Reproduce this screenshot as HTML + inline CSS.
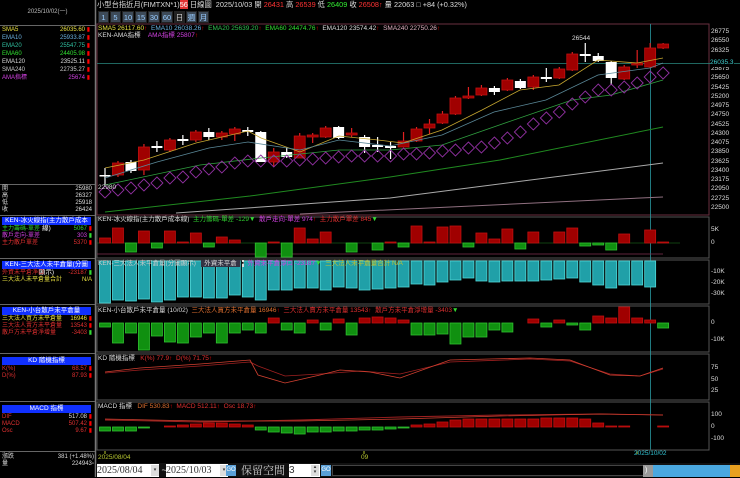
<!DOCTYPE html>
<html><head><meta charset="utf-8">
<style>
*{margin:0;padding:0;box-sizing:border-box}
body{width:740px;height:477px;background:#000;overflow:hidden;position:relative;font-family:"Liberation Sans","Noto Sans CJK TC",sans-serif;font-size:7px;color:#ddd}
.a{position:absolute;white-space:nowrap;line-height:8px}
.r{text-align:right}
.hd{position:absolute;left:2px;width:89px;height:8px;background:#1030ff;color:#fff;text-align:center;font-size:6.5px;line-height:8px}
.btn{position:absolute;top:11px;height:12px;width:11px;background:#3d4a58;color:#9cf;font-size:7.5px;text-align:center;line-height:12px;border:1px solid #222}
svg{position:absolute;left:0;top:0}
</style></head><body>
<svg id="s" width="740" height="477"></svg>

<div class="a" style="left:0;top:8px;width:95px;text-align:center;color:#bbb;font-size:6px">2025/10/02(一)</div>
<div style="position:absolute;left:0;top:25px;width:95px;height:1px;background:#666"></div>
<div class="a" style="left:2px;top:26px;color:#e8e040;font-size:6px">SMA5</div><div class="a r" style="left:40px;width:50px;top:26px;color:#e8e040;font-size:6px">26035.60 <span style="color:red">▮</span></div>
<div class="a" style="left:2px;top:34px;color:#6ab0e0;font-size:6px">EMA10</div><div class="a r" style="left:40px;width:50px;top:34px;color:#6ab0e0;font-size:6px">25933.87 <span style="color:red">▮</span></div>
<div class="a" style="left:2px;top:42px;color:#30c0a0;font-size:6px">EMA20</div><div class="a r" style="left:40px;width:50px;top:42px;color:#30c0a0;font-size:6px">25547.75 <span style="color:red">▮</span></div>
<div class="a" style="left:2px;top:50px;color:#30e030;font-size:6px">EMA60</div><div class="a r" style="left:40px;width:50px;top:50px;color:#30e030;font-size:6px">24405.98 <span style="color:red">▮</span></div>
<div class="a" style="left:2px;top:58px;color:#ddd;font-size:6px">EMA120</div><div class="a r" style="left:40px;width:50px;top:58px;color:#ddd;font-size:6px">23525.11 <span style="color:red">▮</span></div>
<div class="a" style="left:2px;top:66px;color:#ccc;font-size:6px">SMA240</div><div class="a r" style="left:40px;width:50px;top:66px;color:#ccc;font-size:6px">22735.27 <span style="color:red">▮</span></div>
<div class="a" style="left:2px;top:74px;color:#d040e0;font-size:6px">AMA指標</div><div class="a r" style="left:40px;width:50px;top:74px;color:#d040e0;font-size:6px">25674 <span style="color:red">▮</span></div>
<div style="position:absolute;left:0;top:184px;width:95px;height:1px;background:#666"></div>
<div class="a" style="left:2px;top:185px;font-size:6px">開</div><div class="a r" style="left:40px;width:52px;top:185px;font-size:6px">25980</div>
<div class="a" style="left:2px;top:192px;font-size:6px">高</div><div class="a r" style="left:40px;width:52px;top:192px;font-size:6px">26327</div>
<div class="a" style="left:2px;top:199px;font-size:6px">低</div><div class="a r" style="left:40px;width:52px;top:199px;font-size:6px">25918</div>
<div class="a" style="left:2px;top:206px;font-size:6px">收</div><div class="a r" style="left:40px;width:52px;top:206px;font-size:6px">26424</div>
<div style="position:absolute;left:0;top:215px;width:95px;height:1px;background:#666"></div>
<div class="hd" style="top:217px">KEN-冰火線指(主力散戶成本線)</div>
<div class="a" style="left:2px;top:225px;color:#30d030;font-size:6px">主力籌碼-單差</div><div class="a r" style="left:40px;width:52px;top:225px;color:#30d030;font-size:6px">5067 <span style="color:red">▮</span></div>
<div class="a" style="left:2px;top:232px;color:#d040e0;font-size:6px">散戶走向-單差</div><div class="a r" style="left:40px;width:52px;top:232px;color:#d040e0;font-size:6px">303 <span style="color:#3d3">▮</span></div>
<div class="a" style="left:2px;top:239px;color:#e03030;font-size:6px">主力散戶單差</div><div class="a r" style="left:40px;width:52px;top:239px;color:#e03030;font-size:6px">5370 <span style="color:red">▮</span></div>
<div style="position:absolute;left:0;top:258px;width:95px;height:1px;background:#666"></div>
<div class="hd" style="top:261px">KEN-三大法人未平倉量(分圖顯示)</div>
<div class="a" style="left:2px;top:269px;color:#e03030;font-size:6px">外資未平倉淨口</div><div class="a r" style="left:40px;width:52px;top:269px;color:#e03030;font-size:6px">-23187 <span style="color:#3d3">▮</span></div>
<div class="a" style="left:2px;top:276px;color:#e8e040;font-size:6px">三大法人未平倉量合計</div><div class="a r" style="left:40px;width:52px;top:276px;color:#e8e040;font-size:6px">N/A</div>
<div style="position:absolute;left:0;top:304px;width:95px;height:1px;background:#666"></div>
<div class="hd" style="top:307px">KEN-小台散戶未平倉量</div>
<div class="a" style="left:2px;top:315px;color:#e8e040;font-size:6px">三大法人買方未平倉量</div><div class="a r" style="left:40px;width:52px;top:315px;color:#e8e040;font-size:6px">16946 <span style="color:red">▮</span></div>
<div class="a" style="left:2px;top:322px;color:#e03030;font-size:6px">三大法人賣方未平倉量</div><div class="a r" style="left:40px;width:52px;top:322px;color:#e03030;font-size:6px">13543 <span style="color:red">▮</span></div>
<div class="a" style="left:2px;top:329px;color:#e03030;font-size:6px">散戶方未平倉淨增量</div><div class="a r" style="left:40px;width:52px;top:329px;color:#e03030;font-size:6px">-3403 <span style="color:#3d3">▮</span></div>
<div style="position:absolute;left:0;top:353px;width:95px;height:1px;background:#666"></div>
<div class="hd" style="top:357px">KD 隨機指標</div>
<div class="a" style="left:2px;top:365px;color:#e03030;font-size:6px">K(%)</div><div class="a r" style="left:40px;width:52px;top:365px;color:#e03030;font-size:6px">68.57 <span style="color:red">▮</span></div>
<div class="a" style="left:2px;top:372px;color:#e03030;font-size:6px">D(%)</div><div class="a r" style="left:40px;width:52px;top:372px;color:#e03030;font-size:6px">87.93 <span style="color:red">▮</span></div>
<div style="position:absolute;left:0;top:401px;width:95px;height:1px;background:#666"></div>
<div class="hd" style="top:405px">MACD 指標</div>
<div class="a" style="left:2px;top:413px;color:#e03030;font-size:6px">DIF</div><div class="a r" style="left:40px;width:52px;top:413px;color:#ddd;font-size:6px">517.08 <span style="color:red">▮</span></div>
<div class="a" style="left:2px;top:420px;color:#e03030;font-size:6px">MACD</div><div class="a r" style="left:40px;width:52px;top:420px;color:#e03030;font-size:6px">507.42 <span style="color:red">▮</span></div>
<div class="a" style="left:2px;top:427px;color:#e03030;font-size:6px">Osc</div><div class="a r" style="left:40px;width:52px;top:427px;color:#e03030;font-size:6px">9.67 <span style="color:red">▮</span></div>
<div style="position:absolute;left:0;top:451px;width:95px;height:1px;background:#666"></div>
<div class="a" style="left:2px;top:453px;font-size:6px">漲跌</div><div class="a r" style="left:40px;width:54px;top:453px;font-size:6px">381 (+1.48%)</div>
<div class="a" style="left:2px;top:460px;font-size:6px">量</div><div class="a r" style="left:40px;width:54px;top:460px;font-size:6px">224943▫</div>

<div class="a" style="left:97px;top:1px;font-size:7.3px;color:#ddd">小型台指近月(FIMTXN*1)<span style="background:#e03030;color:#fff">56</span> 日線圖&nbsp; 2025/10/03 <span>開</span> <span style="color:#f33">26431</span> 高 <span style="color:#f33">26539</span> 低 <span style="color:#3e3">26409</span> 收 <span style="color:#f33">26508</span><span style="color:#f33">↑</span> 量 22063 □ +84 (+0.32%)</div>
<div class="btn" style="left:98px">1</div><div class="btn" style="left:110px">5</div><div class="btn" style="left:122px;width:12px">10</div><div class="btn" style="left:135px;width:12px">15</div><div class="btn" style="left:148px;width:12px">30</div><div class="btn" style="left:161px;width:12px">60</div><div class="btn" style="left:174px;background:#222;color:#ccc">日</div><div class="btn" style="left:186px">週</div><div class="btn" style="left:198px">月</div>

<div class="a" style="left:98px;top:25px;font-size:6.5px"><span style="color:#e8e040">SMA5 26117.60</span><span style="color:red">↑</span> &nbsp;<span style="color:#6ab0e0">EMA10 26038.26</span><span style="color:red">↑</span> &nbsp;<span style="color:#30c050">EMA20 25639.20</span><span style="color:red">↑</span> &nbsp;<span style="color:#30e030">EMA60 24474.76</span><span style="color:red">↑</span> &nbsp;<span style="color:#ddd">EMA120 23574.42</span><span style="color:red">↑</span> &nbsp;<span style="color:#e0b0c0">SMA240 22750.26</span><span style="color:red">↑</span></div>
<div class="a" style="left:98px;top:32px;font-size:6.5px">KEN-AMA指標 &nbsp;&nbsp;&nbsp;<span style="color:#d040e0">AMA指標 25807</span><span style="color:red">↑</span></div>
<div class="a" style="left:572px;top:35px;font-size:6.5px">26544</div>
<div class="a" style="left:98px;top:184px;font-size:6.5px">22980</div>
<div class="a" style="left:98px;top:216px;font-size:6.5px">KEN-冰火線指(主力散戶成本線) &nbsp;<span style="color:#30d030">主力籌碼-單差 -129</span><span style="color:#3d3">▼</span> &nbsp;<span style="color:#d040e0">散戶走向-單差 974</span><span style="color:red">↑</span> &nbsp;<span style="color:#e03030">主力散戶單差 845</span><span style="color:#3d3">▼</span></div>
<div class="a" style="left:98px;top:260px;font-size:6.5px;color:#ccc">KEN-三大法人未平倉量(分圖顯示) &nbsp;&nbsp;<span style="background:#334;color:#ddd;padding:0 3px">外資未平倉</span> <span style="background:#ddd;color:#000">▪</span> &nbsp;<span style="color:#d040e0">外資未平倉淨口 -23187</span><span style="color:#3d3">▼</span> &nbsp;<span style="color:#c0c030">三大法人未平倉量合計 N/A</span></div>
<div class="a" style="left:98px;top:307px;font-size:6.5px">KEN-小台散戶未平倉量 (10/02) &nbsp;<span style="color:#e07030">三大法人買方未平倉量 16946</span><span style="color:red">↑</span> &nbsp;<span style="color:#e03030">三大法人賣方未平倉量 13543</span><span style="color:red">↑</span> &nbsp;<span style="color:#e03030">散戶方未平倉淨增量 -3403</span><span style="color:#3d3">▼</span></div>
<div class="a" style="left:98px;top:355px;font-size:6.5px">KD 隨機指標 &nbsp;&nbsp;<span style="color:#e03030">K(%) 77.9</span><span style="color:red">↑</span> &nbsp;<span style="color:#e03030">D(%) 71.75</span><span style="color:red">↑</span></div>
<div class="a" style="left:98px;top:403px;font-size:6.5px">MACD 指標 &nbsp;&nbsp;<span style="color:#e07030">DIF 530.83</span><span style="color:red">↑</span> &nbsp;<span style="color:#e03030">MACD 512.11</span><span style="color:red">↑</span> &nbsp;<span style="color:#e03030">Osc 18.73</span><span style="color:red">↑</span></div>

<div id="ax"></div>
<div class="a" style="left:98px;top:454px;font-size:6.5px;color:#b8c830">2025/08/04</div>
<div class="a" style="left:361px;top:454px;font-size:6.5px;color:#b8c830">09</div>
<div class="a" style="left:634px;top:450px;font-size:6.5px;color:#30c0d0">2025/10/02</div>

<div style="position:absolute;left:96px;top:463px;width:644px;height:14px;background:#111"></div>
<div class="a" style="left:97px;top:464px;width:62px;height:13px;background:#fff;color:#333;font-size:10px;line-height:13px;font-family:'Liberation Serif',serif">2025/08/04</div>
<div class="a" style="left:151px;top:465px;width:8px;height:11px;background:#ddd;color:#333;font-size:5px;line-height:11px;text-align:center">▾</div>
<div class="a" style="left:159px;top:464px;color:#ddd;font-size:9px;line-height:13px">&nbsp;~</div>
<div class="a" style="left:166px;top:464px;width:62px;height:13px;background:#fff;color:#333;font-size:10px;line-height:13px;font-family:'Liberation Serif',serif">2025/10/03</div>
<div class="a" style="left:220px;top:465px;width:8px;height:11px;background:#ddd;color:#333;font-size:5px;line-height:11px;text-align:center">▾</div>
<div class="a" style="left:226px;top:465px;width:10px;height:11px;background:#5aa0d8;color:#fff;font-size:6px;line-height:11px;text-align:center">GO</div>
<div class="a" style="left:241px;top:463px;color:#ccc;font-size:11px;line-height:14px;font-family:'Noto Serif CJK SC',serif">保留空間</div>
<div class="a" style="left:289px;top:464px;width:31px;height:13px;background:#fff;color:#333;font-size:10px;line-height:13px">3</div>
<div class="a" style="left:311px;top:465px;width:8px;height:11px;background:#ddd;color:#333;font-size:5px;line-height:5px;text-align:center">▴<br>▾</div>
<div class="a" style="left:321px;top:465px;width:10px;height:11px;background:#5aa0d8;color:#fff;font-size:6px;line-height:11px;text-align:center">GO</div>
<div class="a" style="left:332px;top:465px;width:408px;height:11px;background:#000;border:1px solid #444"></div>
<div class="a" style="left:643px;top:465px;width:97px;height:12px;background:#4aa8e0"></div>
<div class="a" style="left:643px;top:465px;width:10px;height:12px;background:#999;color:#fff;font-size:7px;line-height:12px">&nbsp;)</div>
<div class="a" style="left:730px;top:465px;width:10px;height:12px;background:#e8a020"></div>

<script>
const S=document.getElementById('s');let h='';
const R=(x,y,w,hh,f,st)=>{h+=`<rect x="${x}" y="${y}" width="${w}" height="${hh}" fill="${f}"${st?` stroke="${st}" stroke-width="0.8"`:''}/>`};
const L=(x1,y1,x2,y2,c,w)=>{h+=`<line x1="${x1}" y1="${y1}" x2="${x2}" y2="${y2}" stroke="${c}" stroke-width="${w||1}"/>`};
const P=(pts,c,w)=>{h+=`<polyline points="${pts.map(p=>p.join(',')).join(' ')}" fill="none" stroke="${c}" stroke-width="${w||0.8}"/>`};
L(95.5,0,95.5,477,'#777',1.5);
const pan=[[24,215],[217,258],[260,304],[306,352],[354,400],[402,450]];
pan.forEach(p=>{h+=`<rect x="97" y="${p[0]}" width="612" height="${p[1]-p[0]}" fill="none" stroke="#555" stroke-width="1"/>`});
h+=`<rect x="97" y="24" width="612" height="191" fill="none" stroke="#6a3040" stroke-width="1"/>`;
L(97,63.5,740,63.5,'#2a8a80',0.8);
L(650.5,24,650.5,450,'#2a9aa0',0.8);
const X=i=>105+i*12.98;
const C=[[0,'w',175,176,168,185],[1,'r',163,175,161,177],[2,'w',162,171,160,173],[3,'r',147,170,144,175],[4,'w',146,148,141,152],[5,'r',140,150,138,152],[6,'w',139,141,135,145],[7,'r',132,140,130,142],[8,'w',132,137,128,140],[9,'r',133,137,131,140],[10,'r',129,134,127,141],[11,'w',130,132,127,136],[12,'w',132,162,131,162],[13,'r',152,162,148,167],[14,'w',152,157,147,158],[15,'r',136,158,133,158],[16,'r',135,137,133,143],[17,'r',128,137,126,138],[18,'w',127,138,126,139],[19,'r',133,135,128,137],[20,'w',137,147,135,153],[21,'w',145,147,137,152],[22,'w',146,148,142,159],[23,'r',141,147,132,147],[24,'r',129,141,127,142],[25,'r',124,128,119,134],[26,'r',114,123,111,124],[27,'r',98,114,96,115],[28,'r',96,98,87,99],[29,'r',88,95,85,96],[30,'w',88,92,86,95],[31,'r',80,90,78,91],[32,'w',81,88,79,89],[33,'r',77,87,75,90],[34,'w',77,79,68,82],[35,'r',69,78,67,79],[36,'r',54,70,52,71],[37,'w',54,56,43,62],[38,'w',56,61,53,62],[39,'w',62,78,61,85],[40,'r',67,79,65,80],[41,'r',63,65,50,68],[42,'r',48,67,43,68],[43,'r',44,48,43,49]];
C.forEach(c=>{const x=X(c[0]);const col=c[1]=='r'?'#a00000':'#fff';const wc=c[1]=='r'?'#e02020':'#fff';
L(x,c[4],x,c[5],wc,1.2);const hh=Math.max(c[3]-c[2],1.5);R(x-5.5,c[2],11,hh,col,c[1]=='r'?'#c01010':null);});
P([[105,168],[144,160],[196,143],[248,131],[261,138],[300,152],[339,136],[378,140],[403,143],[442,130],[482,110],[520,90],[559,85],[598,60],[637,63],[663,58]],'#c8a830');
P([[105,178],[157,162],[209,148],[248,142],[300,150],[339,140],[390,146],[442,135],[494,112],[546,100],[598,75],[650,68],[663,63]],'#5a8898');
P([[105,185],[200,165],[261,158],[339,150],[390,150],[442,145],[508,122],[572,100],[611,95],[663,80]],'#30a040');
P([[105,212],[250,196],[390,177],[500,160],[663,127]],'#208a20',1);
P([[176,213],[390,198],[663,163]],'#aaa',1);
P([[300,214],[663,197]],'#907080',1);
const D=[192,190,188,185,183,178,177,172,169,167,163,161,161,161,161,160,159,158,157,156,156,156,156,154,154,153,151,150,148,147,143,138,132,124,118,112,104,97,90,90,87,83,77,73];
D.forEach((y,i)=>{const x=X(i);h+=`<polygon points="${x},${y-6} ${x+6},${y} ${x},${y+6} ${x-6},${y}" fill="none" stroke="#9030a0" stroke-width="0.9"/>`});
L(97,243,680,243,'#208020',0.6);L(97,254,663,254,'#803050',0.7);
const Q=[238,228,252,231,248,231,242,233,247,237,240,243,257,242,257,228,239,232,243,252,243,250,242,247,226,242,227,226,247,233,239,229,249,232,243,232,228,246,245,250,234,243,230,242];
Q.forEach((v,i)=>{const x=X(i)-5.5;if(v<243)R(x,v,11,243-v,'#a00000','#c01010');else if(v>243)R(x,243,11,Math.min(v,257)-243,'#109010','#30c030');});
const T=[303,300,301,299,302,300,297,297,298,298,295,297,300,290,290,288,288,290,287,288,290,289,288,287,284,285,282,280,278,281,282,281,281,281,280,279,278,282,285,288,285,285,287];
T.forEach((v,i)=>R(X(i)-5.5,261,11,v-261,'#20a0a8','#50d8d8'));
const F=[327,343,333,350,336,342,343,337,333,343,333,330,333,318,330,333,320,330,319,335,318,317,318,320,335,335,334,344,337,337,330,332,323,319,327,320,325,330,316,318,307,318,320,328];
F.forEach((v,i)=>{const x=X(i)-5.5;if(v<323)R(x,v,11,323-v,'#a00000','#c01010');else if(v>323)R(x,323,11,v-323,'#109010','#30c030');});
P([[105,373],[140,370],[200,366],[250,362],[258,366],[285,376],[320,374],[360,371],[400,374],[450,362],[530,359],[570,361],[610,374],[640,376],[663,369]],'#a02020');
P([[105,372],[140,368],[200,364],[250,360],[258,375],[285,383],[320,375],[340,370],[370,372],[400,378],[450,360],[530,358],[570,360],[610,375],[640,376],[663,368]],'#d04030');
const M=[431,431,431,428,427,426,425,424,423,423,424,425,430,432,433,434,432,432,431,431,430,430,429,428,425,424,422,420,419,419,419,419,419,419,418,418,418,419,423,426,426,427,427,426];
M.forEach((v,i)=>{const x=X(i)-5.5;if(v<427)R(x,v,11,427-v,'#a00000','#c01010');else if(v>427)R(x,427,11,v-427,'#109010','#30c030');});
P([[105,420],[200,422],[300,420],[400,417],[500,415],[600,414],[663,415]],'#a02020',0.9);
P([[105,419],[200,421],[300,421],[400,419],[500,416],[600,414],[663,415]],'#d04030',0.7);
L(97,450,709,450,'#555',1);L(105,451,105,454,'#b8c830',1);L(364,451,364,454,'#b8c830',1);L(637,451,637,454,'#b8c830',1);
S.innerHTML=h;
let a='';const lab=(t,y,c)=>{a+=`<div class="a" style="left:711px;top:${y-4}px;font-size:6.5px;color:${c||'#ddd'}">${t}</div>`};
const vals=[26775,26550,26325,26100,25875,25650,25425,25200,24975,24750,24525,24300,24075,23850,23625,23400,23175,22950,22725,22500];
vals.forEach(v=>{const y=32+(26775-v)*0.04117;if(v!=26100)lab(v,y)});
a+=`<div class="a" style="left:710px;top:59px;font-size:6.5px;color:#40d0d0;background:#000">26035.3</div>`;
lab('5K',230);lab('0',243);lab('-10K',272);lab('-20K',283);lab('-30K',294);lab('0',323);lab('-10K',340);
lab('75',368);lab('50',380);lab('25',391);lab('100',415);lab('0',427);lab('-100',439);
document.getElementById('ax').innerHTML=a;
</script>
</body></html>
